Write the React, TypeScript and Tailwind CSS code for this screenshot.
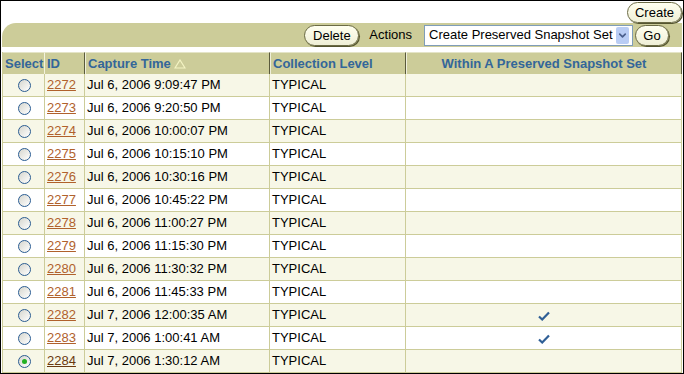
import { ChevronDown } from 'lucide-react';

type Snap = { id: number; time: string; preserved?: boolean; visited?: boolean };

const snaps: Snap[] = [
  { id: 2272, time: 'Jul 6, 2006 9:09:47 PM' },
  { id: 2273, time: 'Jul 6, 2006 9:20:50 PM' },
  { id: 2274, time: 'Jul 6, 2006 10:00:07 PM' },
  { id: 2275, time: 'Jul 6, 2006 10:15:10 PM' },
  { id: 2276, time: 'Jul 6, 2006 10:30:16 PM' },
  { id: 2277, time: 'Jul 6, 2006 10:45:22 PM' },
  { id: 2278, time: 'Jul 6, 2006 11:00:27 PM' },
  { id: 2279, time: 'Jul 6, 2006 11:15:30 PM' },
  { id: 2280, time: 'Jul 6, 2006 11:30:32 PM' },
  { id: 2281, time: 'Jul 6, 2006 11:45:33 PM' },
  { id: 2282, time: 'Jul 7, 2006 12:00:35 AM', preserved: true },
  { id: 2283, time: 'Jul 7, 2006 1:00:41 AM', preserved: true },
  { id: 2284, time: 'Jul 7, 2006 1:30:12 AM', visited: true },
];

const Pill = ({ label, className = '' }: { label: string; className?: string }) => (
  <button
    className={`h-[21px] rounded-full border border-[#6b6b45] bg-[linear-gradient(#ffffef,#efefd6)] shadow-[1px_1px_0_#55552f] text-[13px] leading-none text-black ${className}`}
  >
    {label}
  </button>
);

const Radio = ({ checked }: { checked?: boolean }) => (
  <span className="flex items-center justify-center w-[13px] h-[13px] rounded-full border border-[#2a5c92] bg-[linear-gradient(135deg,#d6d6ce,#ffffff)]">
    {checked && <span className="w-[5px] h-[5px] rounded-full bg-[#22b022]" />}
  </span>
);

const Check = () => (
  <svg width="12" height="10" viewBox="0 0 12 10" className="inline-block">
    <path d="M1 5.5 L4.2 8.5 L11 1.5" fill="none" stroke="#2f5f96" strokeWidth="2.2" />
  </svg>
);

const th =
  'h-[22px] p-0 px-[2px] text-[13px] font-bold text-[#336699] bg-[#cccc99] border-t border-t-[#e4e4c8]';

export default function App() {
  return (
    <div className="w-[684px] h-[374px] border border-black bg-white font-['Liberation_Sans',Arial,sans-serif] text-black overflow-hidden">
      <div className="flex justify-end pt-[1px] pr-[1px] h-[22px]">
        <Pill label="Create" className="w-[55px]" />
      </div>

      <div className="ml-[1px] mr-[1px] h-[24px] bg-[#cccc99] rounded-tl-[14px] flex items-center justify-end pr-[13px]">
        <Pill label="Delete" className="w-[55px] mr-[10px]" />
        <span className="text-[13px] mr-[12px]">Actions</span>
        <div className="w-[209px] h-[21px] border border-[#7f9db9] bg-white flex items-center justify-between pl-[4px] pr-[3px] mr-[2px]">
          <span className="text-[13px] whitespace-nowrap">Create Preserved Snapshot Set</span>
          <span className="w-[13px] h-[17px] bg-[#b9cdf4] rounded-[2px] flex items-center justify-center">
            <ChevronDown size={11} strokeWidth={3.5} color="#4a5f8c" />
          </span>
        </div>
        <Pill label="Go" className="w-[34px]" />
      </div>

      <div className="h-[5px]" />

      <table className="ml-[1px] w-[680px] table-fixed border-separate border-spacing-0 border-l border-l-[#cccc99]">
        <colgroup>
          <col className="w-[42px]" />
          <col className="w-[40px]" />
          <col className="w-[185px]" />
          <col className="w-[136px]" />
          <col className="w-[276px]" />
        </colgroup>
        <thead>
          <tr>
            <th className={`${th} text-left border-r border-r-[#f2f2de]`}>Select</th>
            <th className={`${th} text-left border-r border-r-[#5a5a3c]`}>ID</th>
            <th className={`${th} text-left border-r border-r-[#5a5a3c] border-l border-l-[#efefdb]`}>
              <span className="inline-flex items-center gap-[3px]">
                Capture Time
                <svg width="12" height="10" viewBox="0 0 12 10">
                  <path d="M6 1 L11 9 L1 9 Z" fill="none" stroke="#f4f4c4" strokeWidth="1.2" />
                </svg>
              </span>
            </th>
            <th className={`${th} text-left border-r border-r-[#5a5a3c] border-l border-l-[#efefdb]`}>
              Collection Level
            </th>
            <th className={`${th} text-center border-r border-r-[#5a5a3c] border-l border-l-[#efefdb]`}>
              Within A Preserved Snapshot Set
            </th>
          </tr>
        </thead>
        <tbody>
          {snaps.map((s, i) => {
            const bg = i % 2 === 0 ? 'bg-[#f7f7e7]' : 'bg-white';
            const td = `h-[23px] p-0 px-[2px] text-[13px] border-b border-r border-[#cccc99] ${bg}`;
            return (
              <tr key={s.id}>
                <td className={td}>
                  <div className="flex items-center justify-center pl-[1px]">
                    <Radio checked={s.visited} />
                  </div>
                </td>
                <td className={td}>
                  <a className={`underline ${s.visited ? 'text-[#6a3a10]' : 'text-[#b0612c]'}`}>{s.id}</a>
                </td>
                <td className={`${td} whitespace-nowrap`}>{s.time}</td>
                <td className={td}>TYPICAL</td>
                <td className={`${td} text-center`}>{s.preserved && <Check />}</td>
              </tr>
            );
          })}
        </tbody>
      </table>
    </div>
  );
}
